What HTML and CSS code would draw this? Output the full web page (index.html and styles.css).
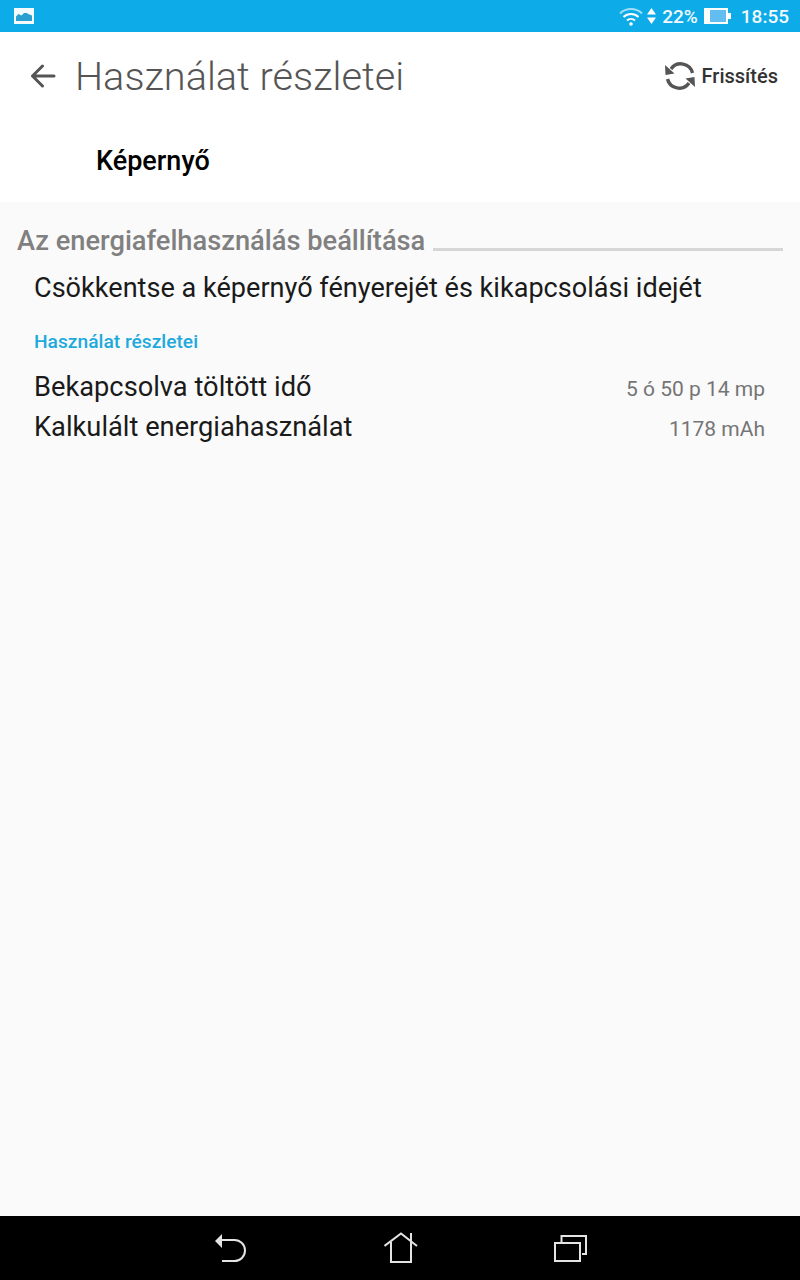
FILE: index.html
```html
<!DOCTYPE html>
<html lang="hu">
<head>
<meta charset="UTF-8" />
<meta name="viewport" content="width=device-width, initial-scale=1" />
<title>Használat részletei</title>
<link rel="stylesheet" href="styles.css">
</head>
<body>

  <!-- Status bar -->
  <div class="status-bar">
    <svg class="pic-icon" width="20" height="16" viewBox="0 0 20 16">
      <rect width="20" height="16" fill="#f4fbfe"/>
      <path d="M2 13V8.500l2.500-2.500 3 1.500 2.500-2.500 2.500 0 3 1.500 2.500 1V13z" fill="#2a9fd0"/>
    </svg>
    <div class="status-right">
      <svg width="26" height="20" viewBox="0 0 26 20" fill="none" stroke="#fff" stroke-width="2">
        <path d="M2 7.500a16 16 0 0 1 22 0" opacity=".6"/>
        <path d="M5.500 11a11 11 0 0 1 15 0"/>
        <path d="M9 14.500a6 6 0 0 1 8 0"/>
        <circle cx="13" cy="18" r="1.800" fill="#fff" stroke="none"/>
      </svg>
      <svg class="arrows" width="9" height="16" viewBox="0 0 9 16" fill="#fff">
        <path d="M4.500 0l4.500 6.500H0zM4.500 16l4.500-6.500H0z"/>
      </svg>
      <span class="pct">22%</span>
      <svg class="battery" width="27" height="16" viewBox="0 0 27 16">
        <rect width="24" height="16" fill="#fff"/>
        <rect x="6" y="2" width="16" height="12" fill="#63bdf0"/>
        <rect x="24" y="5" width="3" height="6" fill="#fff"/>
      </svg>
      <span class="clock">18:55</span>
    </div>
  </div>

  <!-- Action bar -->
  <div class="action-bar">
    <svg class="back" width="26" height="24" viewBox="0 0 26 24" fill="none" stroke="#555" stroke-width="3" stroke-linecap="round" stroke-linejoin="round">
      <path d="M24 12H2.500M12.500 2L2.500 12l10 10"/>
    </svg>
    <h1>Használat részletei</h1>
    <div class="refresh">
      <svg width="32" height="32" viewBox="0 0 32 32" fill="none" stroke="#555" stroke-width="3.400">
        <path d="M7 9A12 12 0 0 1 28.500 13"/>
        <path d="M25 23A12 12 0 0 1 3.500 19"/>
        <path d="M1 5l.5 10 9-1.500zM31 27l-.5-10-9 1.500z" fill="#555" stroke="none"/>
      </svg>
      <span>Frissítés</span>
    </div>
  </div>

  <!-- App title -->
  <div class="app-row">Képernyő</div>

  <div class="content">
    <div class="section-head">
      <span>Az energiafelhasználás beállítása</span>
      <div class="section-line"></div>
    </div>
    <div class="tip">Csökkentse a képernyő fényerejét és kikapcsolási idejét</div>

    <div class="sub-head">Használat részletei</div>
    <div class="row">
      <span class="row-label">Bekapcsolva töltött idő</span>
      <span class="row-value">5 ó 50 p 14 mp</span>
    </div>
    <div class="row">
      <span class="row-label">Kalkulált energiahasználat</span>
      <span class="row-value">1178 mAh</span>
    </div>
  </div>

  <!-- Navigation bar -->
  <div class="nav-bar">
    <svg width="32" height="30" viewBox="0 0 32 30" fill="none" stroke="#e4e4e4" stroke-width="2">
      <path d="M8 7h12.500a10.500 10.500 0 0 1 0 21H8"/>
      <path d="M1 8l7-7v14z" fill="#e4e4e4" stroke="none"/>
    </svg>
    <svg class="nav-home" width="34" height="32" viewBox="0 0 34 32" fill="none" stroke="#e4e4e4" stroke-width="2">
      <path d="M.5 14L17 1.500 33 14"/>
      <path d="M7 10v20h20V10"/>
      <path d="M27 1v8"/>
    </svg>
    <svg width="34" height="30" viewBox="0 0 34 30" fill="none" stroke="#e4e4e4" stroke-width="2">
      <rect x="2" y="10" width="25" height="18"/>
      <path d="M8.500 9V3H33V21H29"/>
    </svg>
  </div>

</body>
</html>
```

FILE: styles.css
```css
* {
  margin: 0; padding: 0; box-sizing: border-box;
}
body {
  width: 800px;
  height: 1280px;
  display: flex;
  flex-direction: column;
  background: #fafafa;
  font-family: Roboto, "Noto Sans", sans-serif;
  overflow: hidden;
}
svg {
  display: block;
  flex-shrink: 0;
}

/* Status bar */
.status-bar {
  height: 32px;
  background: #0dabe8;
  color: #fff;
  display: flex;
  align-items: center;
  justify-content: space-between;
  padding: 0 11px 0 14px;
}
.status-right {
  display: flex;
  align-items: center;
  font-size: 19px;
  font-weight: 500;
  color: #f2fafe;
}
.arrows { margin-left: 3px; }
.pct { margin-left: 6px; }
.battery { margin-left: 6px; }
.clock { margin-left: 10px; }

/* Action bar */
.action-bar {
  height: 84px;
  background: #fff;
  display: flex;
  align-items: center;
  padding: 4px 22px 0 30px;
}
.action-bar h1 {
  margin-left: 19px;
  font-size: 39.700px;
  font-weight: 300;
  color: #555;
  flex: 1;
}
.refresh {
  display: flex;
  align-items: center;
  gap: 6px;
  font-size: 20px;
  font-weight: 500;
  color: #333;
}

.app-row {
  height: 86px;
  background: #fff;
  padding: 3px 0 0 96px;
  display: flex;
  align-items: center;
  font-size: 27px;
  font-weight: 500;
  color: #000;
}

/* Content */
.content {
  flex: 1;
  padding: 23px 17px 0;
}
.section-head {
  display: flex;
  align-items: flex-end;
  font-size: 27.250px;
  font-weight: 500;
  color: #808080;
}
.section-line {
  flex: 1;
  height: 3px;
  margin: 0 0 6px 8px;
  background: #d6d6d6;
}
.tip {
  margin-top: 15px;
  padding-left: 17px;
  font-size: 27.100px;
  color: #1a1a1a;
}
.sub-head {
  margin-top: 26px;
  padding-left: 17px;
  font-size: 19.200px;
  font-weight: 500;
  color: #1eaadc;
}
.row {
  display: flex;
  justify-content: space-between;
  align-items: baseline;
  height: 39.500px;
  padding: 0 18px 0 17px;
}
.sub-head + .row {
  margin-top: 18px;
}
.row-label {
  font-size: 27.250px;
  color: #1a1a1a;
}
.row-value {
  font-size: 21px;
  color: #757575;
}

/* Navigation bar */
.nav-bar {
  height: 64px;
  background: #000;
  display: flex;
  align-items: center;
  padding-left: 214px;
}
.nav-home {
  margin: 0 135px 0 138px;
}
```
